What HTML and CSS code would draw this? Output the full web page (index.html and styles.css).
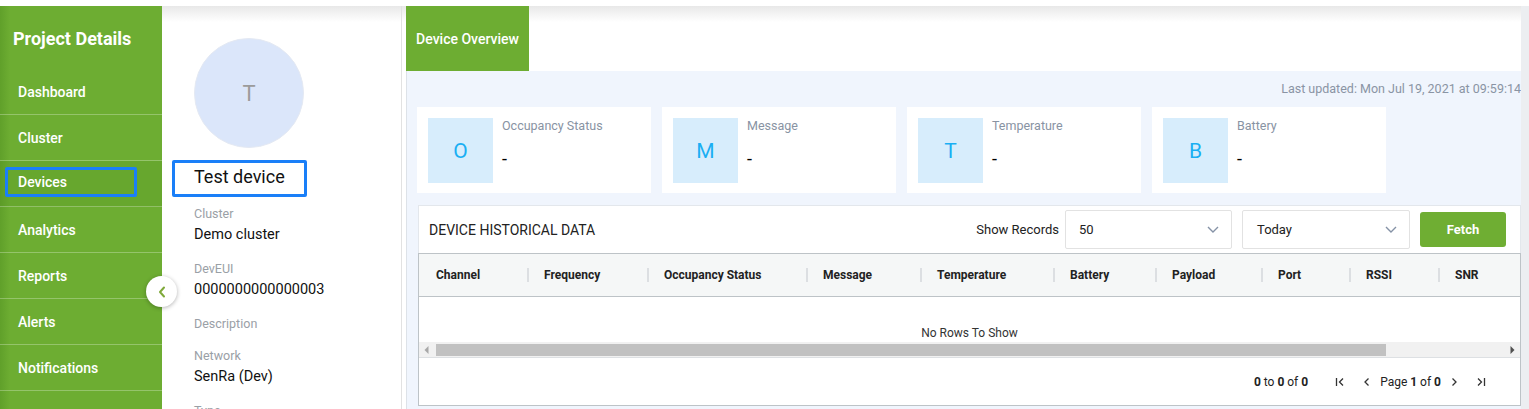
FILE: index.html
```html
<!DOCTYPE html>
<html lang="en">
<head>
<meta charset="utf-8">
<title>Device Overview</title>
<link rel="stylesheet" href="styles.css">
</head>
<body>
<div class="topbar"></div>
<div class="app">
  <aside class="sidebar">
    <div class="side-title">Project Details</div>
    <nav class="side-nav">
      <div class="side-item"><span class="side-link">Dashboard</span></div>
      <div class="side-item"><span class="side-link">Cluster</span></div>
      <div class="side-item active"><span class="side-link">Devices</span></div>
      <div class="side-item"><span class="side-link">Analytics</span></div>
      <div class="side-item"><span class="side-link">Reports</span></div>
      <div class="side-item"><span class="side-link">Alerts</span></div>
      <div class="side-item"><span class="side-link">Notifications</span></div>
    </nav>
  </aside>
  <button class="collapse" type="button" aria-label="Collapse">
    <svg width="8" height="12" viewBox="0 0 8 12"><polyline points="6,1.5 2,6 6,10.5" fill="none" stroke="#7fa93a" stroke-width="2" stroke-linecap="round" stroke-linejoin="round"/></svg>
  </button>

  <section class="profile">
    <div class="avatar">T</div>
    <div class="device-name">Test device</div>
    <div class="props">
      <div class="prop-label">Cluster</div>
      <div class="prop-value">Demo cluster</div>
      <div class="prop-label">DevEUI</div>
      <div class="prop-value">0000000000000003</div>
      <div class="prop-label">Description</div>
      <div class="prop-value"></div>
      <div class="prop-label">Network</div>
      <div class="prop-value">SenRa (Dev)</div>
      <div class="prop-label">Type</div>
    </div>
  </section>

  <main class="main">
    <div class="tabs">
      <div class="tab">Device Overview</div>
    </div>
    <div class="overview">
      <div class="updated">Last updated: Mon Jul 19, 2021 at 09:59:14</div>
      <div class="cards">
        <div class="card"><div class="card-icon">O</div><div class="card-body"><div class="card-label">Occupancy Status</div><div class="card-value">-</div></div></div>
        <div class="card"><div class="card-icon">M</div><div class="card-body"><div class="card-label">Message</div><div class="card-value">-</div></div></div>
        <div class="card"><div class="card-icon">T</div><div class="card-body"><div class="card-label">Temperature</div><div class="card-value">-</div></div></div>
        <div class="card"><div class="card-icon">B</div><div class="card-body"><div class="card-label">Battery</div><div class="card-value">-</div></div></div>
      </div>

      <div class="hist">
        <div class="hist-head">
          <div class="hist-title">DEVICE HISTORICAL DATA</div>
          <span class="show-label">Show Records</span>
          <div class="select"><span>50</span><svg width="12" height="7" viewBox="0 0 12 7"><polyline points="1,1 6,6 11,1" fill="none" stroke="#8592a6" stroke-width="1.4"/></svg></div>
          <div class="select second"><span>Today</span><svg width="12" height="7" viewBox="0 0 12 7"><polyline points="1,1 6,6 11,1" fill="none" stroke="#8592a6" stroke-width="1.4"/></svg></div>
          <button class="fetch" type="button">Fetch</button>
        </div>
        <div class="grid">
          <div class="grid-header">
            <div class="hcell c1"><span>Channel</span><i class="hsep"></i></div>
            <div class="hcell c2"><span>Frequency</span><i class="hsep"></i></div>
            <div class="hcell c3"><span>Occupancy Status</span><i class="hsep"></i></div>
            <div class="hcell c4"><span>Message</span><i class="hsep"></i></div>
            <div class="hcell c5"><span>Temperature</span><i class="hsep"></i></div>
            <div class="hcell c6"><span>Battery</span><i class="hsep"></i></div>
            <div class="hcell c7"><span>Payload</span><i class="hsep"></i></div>
            <div class="hcell c8"><span>Port</span><i class="hsep"></i></div>
            <div class="hcell c9"><span>RSSI</span><i class="hsep"></i></div>
            <div class="hcell c10"><span>SNR</span></div>
          </div>
          <div class="grid-body">No Rows To Show</div>
          <div class="hscroll">
            <div class="sb-btn"><svg width="5" height="8" viewBox="0 0 5 8"><polygon points="4.5,0 0.5,4 4.5,8" fill="#a8a8a8"/></svg></div>
            <div class="sb-track"><div class="sb-thumb"></div></div>
            <div class="sb-btn"><svg width="5" height="8" viewBox="0 0 5 8"><polygon points="0.5,0 4.5,4 0.5,8" fill="#505050"/></svg></div>
          </div>
          <div class="paging">
            <span class="summary"><b>0</b> to <b>0</b> of <b>0</b></span>
            <svg class="pg-first" width="10" height="10" viewBox="0 0 10 10"><line x1="1.5" y1="1" x2="1.5" y2="9" stroke="#333" stroke-width="1.3"/><polyline points="8,1.5 4.5,5 8,8.5" fill="none" stroke="#333" stroke-width="1.3"/></svg>
            <svg class="pg-prev" width="7" height="10" viewBox="0 0 7 10"><polyline points="5.5,1.5 2,5 5.5,8.5" fill="none" stroke="#333" stroke-width="1.3"/></svg>
            <span class="page-text">Page <b>1</b> of <b>0</b></span>
            <svg class="pg-next" width="7" height="10" viewBox="0 0 7 10"><polyline points="1.5,1.5 5,5 1.5,8.5" fill="none" stroke="#333" stroke-width="1.3"/></svg>
            <svg class="pg-last" width="10" height="10" viewBox="0 0 10 10"><polyline points="2,1.5 5.5,5 2,8.5" fill="none" stroke="#333" stroke-width="1.3"/><line x1="8.5" y1="1" x2="8.5" y2="9" stroke="#333" stroke-width="1.3"/></svg>
          </div>
        </div>
      </div>
    </div>
  </main>
  <div class="vscroll"></div>
</div>
</body>
</html>
```

FILE: styles.css
```css
* { box-sizing: border-box; }

body {
  margin: 0;
  width: 1529px;
  height: 409px;
  overflow: hidden;
  background: #fff;
  font-family: Roboto, "Liberation Sans", Arial, sans-serif;
  color: #222;
}

.topbar {
  height: 6px;
  background: #fff;
}

.app {
  position: relative;
  display: flex;
  height: 403px;
}

/* Sidebar */
.sidebar {
  width: 162px;
  flex: none;
  color: #fff;
  background: linear-gradient(to right, #60a02a 0, #6dad32 10px, #6dad32 100%);
}

.side-title {
  font-size: 18px;
  font-weight: 700;
  line-height: 22px;
  padding: 22px 13px 19px;
}

.side-item {
  height: 46px;
  display: flex;
  align-items: center;
  padding-left: 5px;
  border-bottom: 1px solid rgba(255, 255, 255, 0.28);
}

.side-item.active {
  padding-bottom: 3px;
  background: linear-gradient(to right, #5c9b27 0, #67a72e 10px, #67a72e 100%);
}

.side-link {
  width: 132px;
  height: 30px;
  display: flex;
  align-items: center;
  padding-left: 10px;
  border: 3px solid transparent;
  border-radius: 2px;
  font-size: 14px;
  font-weight: 500;
}

.side-item.active .side-link {
  border-color: #1a7ff8;
}

.collapse {
  position: absolute;
  left: 146px;
  top: 270px;
  width: 31px;
  height: 31px;
  padding: 0;
  border: none;
  border-radius: 50%;
  background: #fff;
  box-shadow: 0 1px 4px rgba(0, 0, 0, 0.3);
  display: flex;
  align-items: center;
  justify-content: center;
}

/* Profile */
.profile {
  width: 240px;
  flex: none;
  padding-left: 10px;
  border-right: 1px solid #e2e2e2;
  background: linear-gradient(#e8e8e8 0, #fff 16px);
  overflow: hidden;
}

.avatar {
  width: 110px;
  height: 110px;
  margin: 32px 0 0 22px;
  border-radius: 50%;
  background: #dbe6fa;
  border: 1px solid #e4e9f3;
  display: flex;
  align-items: center;
  justify-content: center;
  font-size: 22px;
  color: #9b9b9b;
}

.device-name {
  margin-top: 12px;
  width: 135px;
  height: 37px;
  padding: 0 0 4px 19px;
  border: 3px solid #1a7ff8;
  border-radius: 2px;
  display: flex;
  align-items: center;
  font-size: 18px;
  color: #111;
}

.props {
  margin: 9px 0 0 22px;
}

.prop-label {
  font-size: 12.5px;
  line-height: 16px;
  color: #9aa0a6;
}

.prop-value {
  font-size: 14.5px;
  line-height: 20px;
  color: #111;
  margin: 3px 0 16px;
}

/* Main */
.main {
  flex: 1;
  min-width: 0;
  display: flex;
  flex-direction: column;
  padding-left: 4px;
  background: linear-gradient(#e8e8e8 0, #fff 16px);
}

.vscroll {
  width: 8px;
  flex: none;
  background: #eceef1;
}

.tabs {
  height: 65px;
  flex: none;
  display: flex;
}

.tab {
  width: 123px;
  background: #6dad32;
  color: #fff;
  font-size: 14px;
  font-weight: 500;
  display: flex;
  align-items: center;
  justify-content: center;
}

.overview {
  flex: 1;
  background: #f0f5fd;
  border-left: 1px solid #dde2e8;
  padding-left: 10px;
}

.updated {
  text-align: right;
  font-size: 12.5px;
  line-height: 18px;
  color: #8a94a4;
  padding-top: 9px;
}

.cards {
  display: flex;
  gap: 11px;
  margin-top: 9px;
}

.card {
  width: 234px;
  height: 86px;
  padding: 11px;
  background: #fff;
  display: flex;
}

.card-icon {
  width: 65px;
  height: 65px;
  flex: none;
  background: #d7edfc;
  color: #1aaff3;
  font-size: 21px;
  display: flex;
  align-items: center;
  justify-content: center;
}

.card-body {
  margin-left: 9px;
}

.card-label {
  font-size: 12.5px;
  line-height: 16px;
  color: #8893a3;
}

.card-value {
  font-size: 18px;
  line-height: 22px;
  margin-top: 14px;
  color: #000;
}

/* Historical data */
.hist {
  margin: 12px 0 0 1px;
  background: #fff;
  border: 1px solid #e3e7ec;
}

.hist-head {
  height: 47px;
  display: flex;
  align-items: center;
  padding: 0 14px 0 10px;
}

.hist-title {
  flex: 1;
  font-size: 14px;
  color: #222;
}

.show-label {
  font-size: 13px;
  color: #222;
  margin-right: 6px;
}

.select {
  width: 167px;
  height: 39px;
  border: 1px solid #e2e2e2;
  border-radius: 2px;
  display: flex;
  align-items: center;
  justify-content: space-between;
  padding: 0 12px 0 13px;
  font-size: 13px;
  color: #222;
}

.select.second {
  width: 168px;
  margin-left: 10px;
  padding-left: 14px;
}

.fetch {
  margin-left: 10px;
  width: 86px;
  height: 35px;
  border: none;
  border-radius: 3px;
  background: #6fae33;
  color: #fff;
  font-family: inherit;
  font-size: 13px;
  font-weight: 700;
}

.grid {
  margin: 0 -1px -1px;
  border: 1px solid #bdc3c7;
  overflow: hidden;
}

.grid-header {
  height: 43px;
  display: flex;
  background: #f5f7f7;
  border-bottom: 1px solid #bdc3c7;
  overflow: hidden;
}

.hcell {
  flex: none;
  display: flex;
  align-items: center;
  justify-content: space-between;
  padding-left: 15px;
  font-size: 12px;
  font-weight: 700;
  color: #222;
  white-space: nowrap;
}

.hsep {
  width: 2px;
  height: 14px;
  background: #dcdfe2;
}

.c1 { width: 110px; padding-left: 17px; }
.c2 { width: 120px; }
.c3 { width: 159px; }
.c4 { width: 114px; }
.c5 { width: 133px; }
.c6 { width: 102px; }
.c7 { width: 106px; }
.c8 { width: 88px; }
.c9 { width: 89px; }
.c10 { width: 110px; }

.grid-body {
  height: 45px;
  padding-top: 29px;
  text-align: center;
  font-size: 12px;
  line-height: 14px;
  color: #333;
}

.hscroll {
  height: 15px;
  display: flex;
  background: #f1f1f1;
}

.sb-btn {
  width: 15px;
  flex: none;
  display: flex;
  align-items: center;
  justify-content: center;
}

.sb-track {
  flex: 1;
  padding: 2px 0 1px 2px;
}

.sb-thumb {
  width: 950px;
  height: 100%;
  background: #c1c1c1;
}

.paging {
  height: 48px;
  display: flex;
  align-items: center;
  justify-content: flex-end;
  padding-right: 34px;
  border-top: 1px solid #dde0e3;
  font-size: 12px;
  color: #222;
}

.paging b {
  font-weight: 700;
}

.pg-first { margin-left: 27px; }
.pg-prev { margin-left: 18px; }
.page-text { margin-left: 10px; }
.pg-next { margin-left: 10px; }
.pg-last { margin-left: 18px; }
```
